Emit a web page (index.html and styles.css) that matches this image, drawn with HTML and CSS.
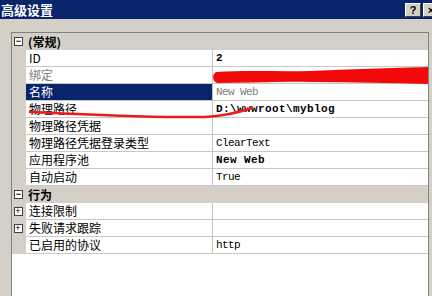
FILE: index.html
```html
<!DOCTYPE html>
<html lang="zh-CN">
<head>
    <meta charset="UTF-8">
    <title>高级设置</title>
    <link rel="stylesheet" href="styles.css">
</head>
<body>

    <div class="window">
        <div class="titlebar">
            <span class="title">高级设置</span>
            <div class="caption-buttons">
                <span class="cap-btn">?</span>
                <span class="cap-btn">×</span>
            </div>
        </div>

        <div class="content">
            <div class="grid">
                <div class="category"><span class="box">−</span><span>(常规)</span></div>
                <div class="row"><span class="gutter"></span><span class="name">ID</span><span class="value bold">2</span></div>
                <div class="row"><span class="gutter"></span><span class="name muted">绑定</span><span class="value"></span></div>
                <div class="row selected"><span class="gutter"></span><span class="name">名称</span><span class="value muted">New Web</span></div>
                <div class="row"><span class="gutter"></span><span class="name">物理路径</span><span class="value bold">D:\wwwroot\myblog</span></div>
                <div class="row"><span class="gutter"></span><span class="name">物理路径凭据</span><span class="value"></span></div>
                <div class="row"><span class="gutter"></span><span class="name">物理路径凭据登录类型</span><span class="value">ClearText</span></div>
                <div class="row"><span class="gutter"></span><span class="name">应用程序池</span><span class="value bold">New Web</span></div>
                <div class="row"><span class="gutter"></span><span class="name">自动启动</span><span class="value">True</span></div>
                <div class="category"><span class="box">−</span><span>行为</span></div>
                <div class="row"><span class="gutter"><span class="box">+</span></span><span class="name">连接限制</span><span class="value"></span></div>
                <div class="row"><span class="gutter"><span class="box">+</span></span><span class="name">失败请求跟踪</span><span class="value"></span></div>
                <div class="row"><span class="gutter"></span><span class="name">已启用的协议</span><span class="value">http</span></div>
            </div>

            <!-- red marks drawn over the screenshot -->
            <svg class="scribble" width="432" height="296" viewBox="0 0 432 296">
                <path d="M216 72 C250 70 280 72 310 71 C350 69 390 68 428 67 L428 84 C390 83 350 82 310 82 C280 81 250 83 217 83 C212 81 212 74 216 72 Z" fill="#f20a0a"/>
                <path d="M30 112 C80 114 150 118 205 117 C225 116 240 112 252 108" fill="none" stroke="#ee1a1a" stroke-width="2.5" stroke-linecap="round"/>
            </svg>
        </div>
    </div>

</body>
</html>
```

FILE: styles.css
```css
body { margin: 0; background: #d4d0c8; font-family: "Noto Sans CJK SC", sans-serif; font-size: 12px; }
.window { width: 432px; height: 296px; overflow: hidden; display: flex; flex-direction: column; background: #d4d0c8; }

.titlebar { height: 19px; background: #0a246a; color: white; display: flex; align-items: center; justify-content: space-between; }
.title { font-weight: bold; font-size: 13px; line-height: 19px; padding-left: 1px; }
.caption-buttons { display: flex; gap: 2px; margin-right: -7px; }
.cap-btn { width: 14px; height: 12px; background: #d4d0c8; color: black; font-family: "Liberation Sans", sans-serif; font-weight: bold; font-size: 11px; line-height: 12px; text-align: center; border: 1px solid; border-color: #fff #404040 #404040 #fff; }

.content { position: relative; flex: 1; padding: 13px 3px 0 11px; display: flex; }
.grid { flex: 1; background: white; border: 1px solid #808080; border-bottom: none; }

.category { height: 17px; background: #d4d0c8; display: flex; align-items: center; font-weight: bold; }
.category .box { margin: 0 5px 0 2px; }

.box { width: 7px; height: 7px; border: 1px solid #404040; background: white; font-size: 9px; line-height: 7px; text-align: center; font-family: "Liberation Sans", sans-serif; color: black; }

.row { height: 17px; display: flex; }
.gutter { width: 14px; background: #d4d0c8; display: flex; align-items: center; justify-content: center; }
.gutter .box { margin-left: -2px; }
.name { width: 183px; padding-left: 3px; border-right: 1px solid #c0c0c0; border-bottom: 1px solid #c8c8c8; line-height: 16px; white-space: nowrap; }
.value { flex: 1; padding-left: 3px; border-bottom: 1px solid #c8c8c8; line-height: 16px; font-family: "Liberation Mono", monospace; font-size: 11px; letter-spacing: -0.6px; white-space: nowrap; }
.value.bold { font-weight: bold; letter-spacing: 0.4px; }
.muted { color: #808080; }
.selected .name { background: #0a246a; color: white; }

.scribble { position: absolute; left: 0; top: -19px; pointer-events: none; }
```
